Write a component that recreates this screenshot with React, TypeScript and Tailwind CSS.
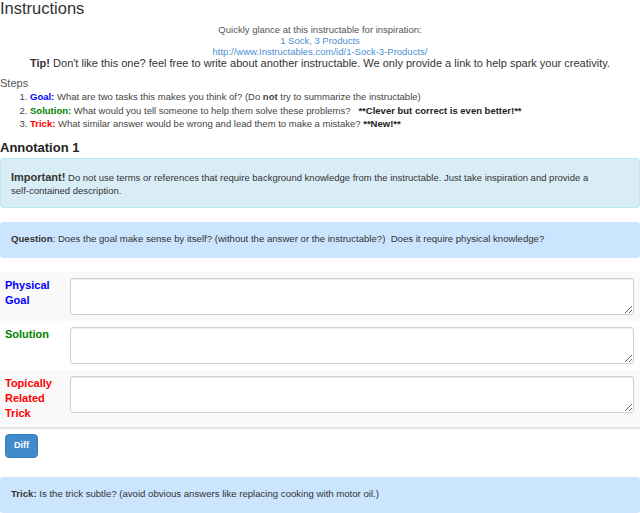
import React from 'react';

const font = { fontFamily: '"Liberation Sans", Arial, sans-serif' };

function FieldRow({
  label,
  color,
  striped,
  height,
}: {
  label: string[];
  color: string;
  striped?: boolean;
  height: string;
}) {
  return (
    <div className={`flex ${striped ? 'bg-[#f9f9f9]' : 'bg-white'} ${height}`}>
      <div className={`w-[70px] shrink-0 pl-[5px] pt-[6px] text-[11px] font-bold leading-[15px] ${color}`}>
        {label.map((l) => (
          <div key={l}>{l}</div>
        ))}
      </div>
      <div className="flex-1 pr-[6px] pt-[6px]">
        <textarea className="block h-[37px] w-full resize-y rounded-[3px] border border-[#cfcfcf] bg-white shadow-[inset_0_1px_1px_rgba(0,0,0,0.075)]" />
      </div>
    </div>
  );
}

export default function App() {
  return (
    <div className="h-[513px] w-[640px] overflow-hidden bg-white text-[#333]" style={font}>
      <h1 className="h-[20px] text-[16.5px] leading-[16px]">Instructions</h1>

      {/* 灵感链接 */}
      <div className="text-center text-[9.5px] leading-[11px]">
        <div className="mt-[4px] text-[#555]">Quickly glance at this instructable for inspiration:</div>
        <div className="text-[#4a8fd4]">1 Sock, 3 Products</div>
        <div className="text-[#4a8fd4]">http://www.Instructables.com/id/1-Sock-3-Products/</div>
        <div className="text-[11px] leading-[12px] text-[#333]">
          <b>Tip!</b> Don't like this one? feel free to write about another instructable. We only provide a link to help spark your creativity.
        </div>
      </div>

      <div className="mt-[8px] text-[11px] leading-[12px] text-[#555]">Steps</div>
      <ol className="mt-[1px] list-decimal pl-[30px] text-[9.5px] leading-[13.5px] text-[#444]">
        <li>
          <b className="text-[#0000ff]">Goal:</b> What are two tasks this makes you think of? (Do <b>not</b> try to summarize the instructable)
        </li>
        <li>
          <b className="text-[#008000]">Solution:</b> What would you tell someone to help them solve these problems?&nbsp;&nbsp;&nbsp;
          <b className="text-[#222]">**Clever but correct is even better!**</b>
        </li>
        <li>
          <b className="text-[#ff0000]">Trick:</b> What similar answer would be wrong and lead them to make a mistake? <b className="text-[#222]">**New!**</b>
        </li>
      </ol>

      <h2 className="mt-[10px] text-[13px] font-bold leading-[14px] text-[#222]">Annotation 1</h2>

      <div className="mt-[3px] h-[50px] rounded-[3px] border border-[#bce8f1] bg-[#d9edf7] pl-[10px] pr-[40px] pt-[12px] text-[9.5px] leading-[13px] text-[#333]">
        <b className="text-[11px] leading-[13px]">Important!</b> Do not use terms or references that require background knowledge from the instructable. Just take inspiration and provide a self-contained description.
      </div>

      <div className="mt-[14px] flex h-[36px] items-center rounded-[3px] bg-[#cce5ff] px-[11px] text-[9.6px] text-[#333]">
        <span>
          <b>Question</b>: Does the goal make sense by itself? (without the answer or the instructable?)&nbsp; Does it require physical knowledge?
        </span>
      </div>

      <div className="mt-[14px] border-b-2 border-[#e3e3e3]">
        <FieldRow label={['Physical', 'Goal']} color="text-[#0000ff]" striped height="h-[49px]" />
        <FieldRow label={['Solution']} color="text-[#008000]" height="h-[49px]" />
        <FieldRow label={['Topically', 'Related', 'Trick']} color="text-[#ff0000]" striped height="h-[57px]" />
      </div>

      <button className="ml-[5px] mt-[5px] h-[24px] w-[33px] rounded-[4px] border border-[#357ebd] bg-[#428bca] text-[9px] font-bold text-white">
        Diff
      </button>

      <div className="mt-[19px] flex h-[36px] items-center rounded-[3px] bg-[#cce5ff] px-[11px] text-[9.6px] text-[#333]">
        <span>
          <b>Trick:</b> Is the trick subtle? (avoid obvious answers like replacing cooking with motor oil.)
        </span>
      </div>
    </div>
  );
}
